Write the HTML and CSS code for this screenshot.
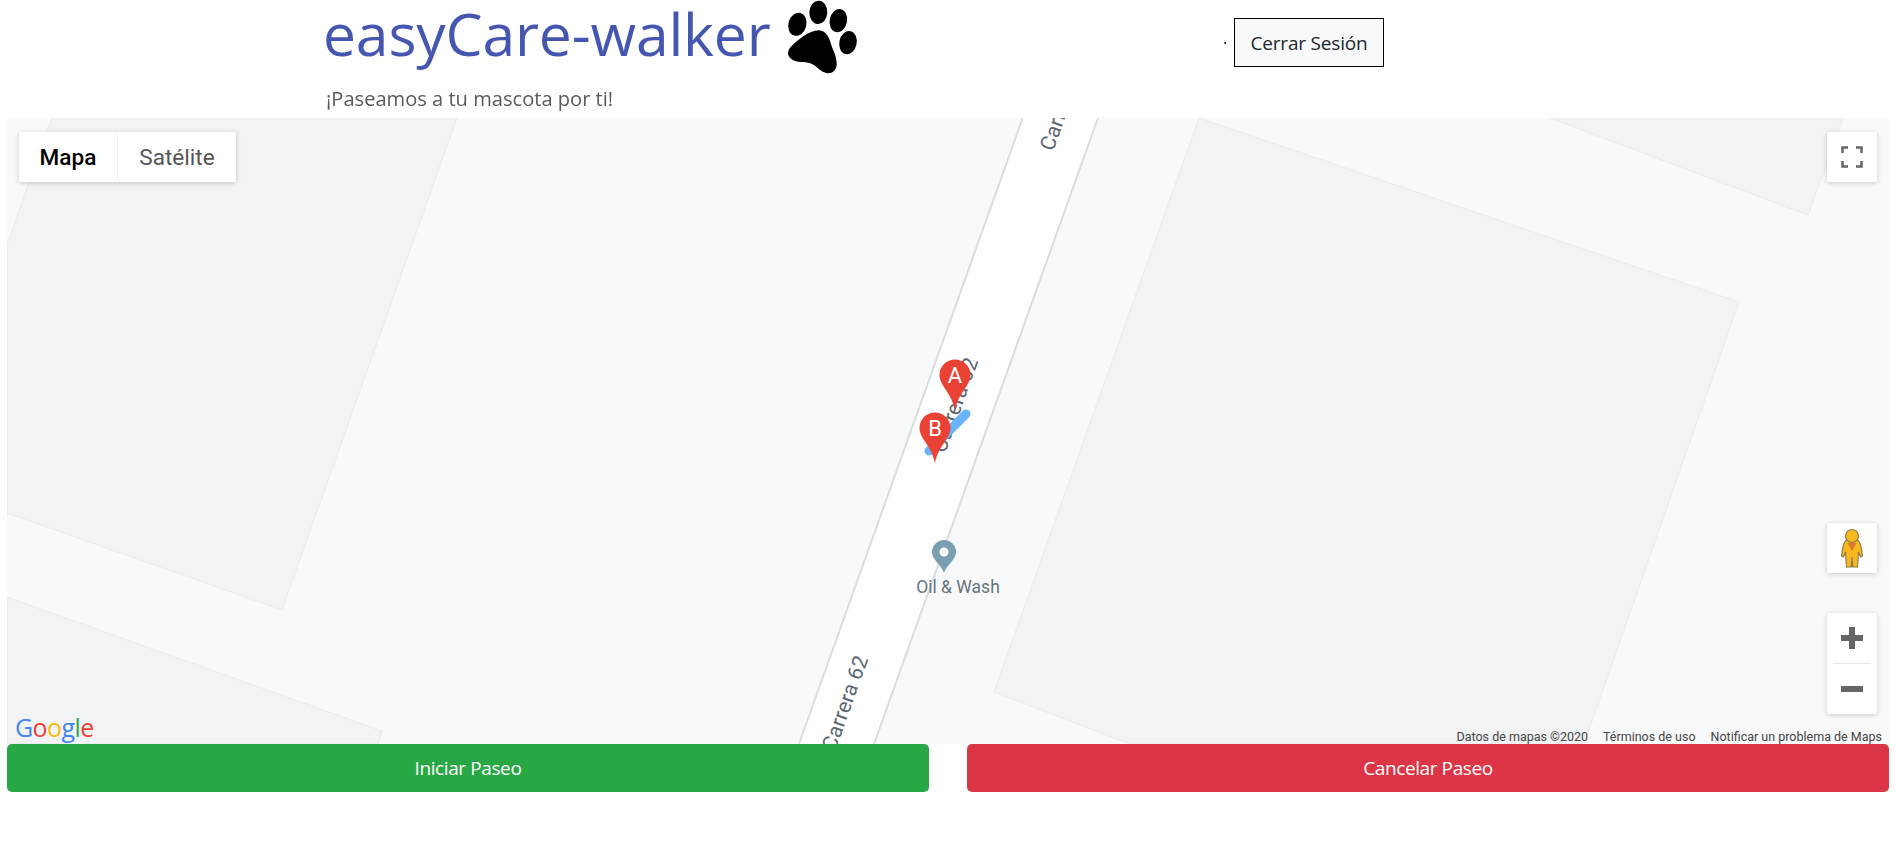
FILE: index.html
```html
<!DOCTYPE html>
<html lang="es">
<head>
<meta charset="utf-8">
<title>easyCare-walker</title>
<link rel="stylesheet" href="styles.css">
</head>
<body>
<header class="top">
  <div class="brand">
    <div class="logo">
      <span class="logo-text">easyCare-walker</span>
      <svg class="paw" viewBox="0 0 300 240" aria-hidden="true">
        <ellipse cx="85" cy="73" rx="27" ry="35" transform="rotate(15 85 73)"/>
        <ellipse cx="148" cy="37" rx="27" ry="35" transform="rotate(3 148 37)"/>
        <ellipse cx="208" cy="62" rx="26" ry="35" transform="rotate(12 208 62)"/>
        <ellipse cx="237" cy="128" rx="26" ry="35" transform="rotate(12 237 128)"/>
        <path d="M150 91C170 92 181 112 186 132C192 152 204 170 203 194C202 212 188 222 172 219C152 215 142 196 124 190C106 184 84 190 68 178C52 166 55 150 68 138C84 122 122 90 150 91Z"/>
      </svg>
    </div>
    <p class="tagline">¡Paseamos a tu mascota por ti!</p>
  </div>
  <div class="session">
    <span class="dot">.</span>
    <button class="logout">Cerrar Sesión</button>
  </div>
</header>

<main class="map">
  <svg class="map-canvas" viewBox="7 118 1882 626" aria-label="Mapa">
    <polygon class="block" points="52,118 457,118 282,610 7,513 7,245"/>
    <polygon class="block" points="7,597 382,731 378,744 7,744"/>
    <polygon class="block" points="1199,118 1739,302 1584,744 1130,744 994,692"/>
    <polygon class="block" points="1550,118 1843,118 1808,215"/>
    <polygon class="road" points="1022.7,118 1098,118 874,744 799,744"/>
    <line class="road-edge" x1="1022.7" y1="118" x2="799" y2="744"/>
    <line class="road-edge" x1="1098" y1="118" x2="874" y2="744"/>
    <text class="road-label" transform="translate(1053 152) rotate(-70.3)">Carrera 62</text>
    <text class="road-label" transform="translate(945 454) rotate(-70.3)">Carrera 62</text>
    <text class="road-label" transform="translate(835 752) rotate(-70.3)">Carrera 62</text>
    <line class="route" x1="966" y1="414" x2="929" y2="451"/>
    <path class="pin" d="M955 359.500a15.500 15.500 0 0 1 15.500 15.500c0 11-12.500 18-15.500 35.500c-3-17.500-15.500-24.500-15.500-35.500a15.500 15.500 0 0 1 15.500-15.500Z"/>
    <text class="pin-label" x="955" y="383">A</text>
    <path class="pin" d="M935 412.500a15.500 15.500 0 0 1 15.500 15.500c0 11-12.500 18-15.500 35.500c-3-17.500-15.500-24.500-15.500-35.500a15.500 15.500 0 0 1 15.500-15.500Z"/>
    <text class="pin-label" x="935" y="436">B</text>
    <path class="poi" d="M944 540a12 12 0 0 1 12 12c0 8-9 12-12 21c-3-9-12-13-12-21a12 12 0 0 1 12-12Z"/>
    <circle class="poi-hole" cx="944" cy="552" r="4.500"/>
    <text class="poi-label" x="958" y="593">Oil &amp; Wash</text>
  </svg>

  <div class="map-type">
    <span class="type-btn type-on">Mapa</span>
    <span class="type-btn">Satélite</span>
  </div>

  <div class="ctl fullscreen">
    <svg viewBox="0 0 50 50" aria-hidden="true"><path d="M15.500 21V15.500H21M29 15.500H34.500V21M34.500 29V34.500H29M21 34.500H15.500V29"/></svg>
  </div>

  <div class="ctl pegman">
    <svg viewBox="0 0 50 50" aria-hidden="true">
      <path class="peg-body" d="M19.500 17C17 19 16 22 15.500 27L14.500 33L16.500 34L18.500 29L19.500 44H24.300L25 34L25.700 44H30.500L31.500 29L33.500 34L35.500 33L34.500 27C34 22 33 19 30.500 17Z"/>
      <circle class="peg-body" cx="25" cy="13" r="6.500"/>
      <path class="peg-neck" d="M20.500 20H29.500L25 28Z"/>
    </svg>
  </div>

  <div class="ctl zoom">
    <svg class="zoom-icon" viewBox="0 0 50 50" aria-hidden="true"><path d="M14 25H36M25 14V36"/></svg>
    <div class="zoom-sep"></div>
    <svg class="zoom-icon" viewBox="0 0 50 50" aria-hidden="true"><path d="M14 25H36"/></svg>
  </div>

  <div class="google"><span class="g-b">G</span><span class="g-r">o</span><span class="g-y">o</span><span class="g-b">g</span><span class="g-g">l</span><span class="g-r">e</span></div>

  <div class="attrib">
    <span>Datos de mapas ©2020</span>
    <span>Términos de uso</span>
    <span>Notificar un problema de Maps</span>
  </div>
</main>

<div class="actions">
  <button class="action start">Iniciar Paseo</button>
  <button class="action cancel">Cancelar Paseo</button>
</div>
</body>
</html>
```

FILE: styles.css
```css
* { box-sizing: border-box; }
html, body { margin: 0; padding: 0; background: #fff; overflow: hidden; }
body { font-family: "Open Sans", "Noto Sans", sans-serif; color: #212529; }

.top { display: flex; height: 118px; padding-left: 323px; }
.brand { width: 891px; }
.logo { display: flex; height: 80px; }
.logo-text {
  font-size: 58.800px; line-height: 66px; height: 80px; color: #4556b0; letter-spacing: -0.15px;
  white-space: nowrap; filter: blur(0.35px);
}
.paw { width: 100px; height: 80px; margin-left: -2px; fill: #000; flex: none; }
.tagline {
  margin: 5px 0 0 3px; font-size: 20.100px; line-height: 28px; color: #5a5a5a;
  white-space: nowrap; filter: blur(0.3px);
}
.session { display: flex; align-items: flex-start; padding-top: 18px; }
.dot { font-size: 16px; line-height: 40px; width: 20px; padding-left: 9px; color: #000; }
.logout {
  width: 150px; height: 49px; padding: 0; border: 1px solid #000; border-radius: 0;
  background: #f8f9fa; color: #212529; font: 19px "Open Sans", sans-serif; letter-spacing: -0.2px;
}

.map { position: relative; height: 626px; margin: 0 7px; overflow: hidden; background: #f8f9fa; }
.map-canvas { display: block; width: 1882px; height: 626px; }
.block { fill: #f1f3f4; stroke: #e8eaed; stroke-width: 1; }
.road { fill: #fff; }
.road-edge { stroke: #dadce0; stroke-width: 2; }
.road-label { font: 21px Roboto, sans-serif; fill: #5b6670; letter-spacing: 0.2px; }
.route { stroke: #69b3f8; stroke-width: 9; stroke-linecap: round; }
.pin { fill: #ea4335; }
.pin-label { font: 22px Roboto, sans-serif; fill: #fff; text-anchor: middle; }
.poi { fill: #7a9eb2; }
.poi-hole { fill: #fff; }
.poi-label { font: 17.500px Roboto, sans-serif; fill: #66747c; text-anchor: middle; }

.map-type {
  position: absolute; left: 12px; top: 14px; display: flex; height: 50px;
  background: #fff; border-radius: 2px; box-shadow: 0 1px 5px rgba(0,0,0,.2);
}
.type-btn {
  display: flex; align-items: center; justify-content: center;
  width: 118px; font: 22.600px Roboto, sans-serif; color: #565656;
}
.type-on { width: 99px; font-weight: 500; color: #000; border-right: 1px solid #f0f0f0; }

.ctl {
  position: absolute; left: 1820px; width: 50px; background: #fff;
  border-radius: 2px; box-shadow: 0 1px 5px rgba(0,0,0,.2);
}
.ctl svg { display: block; width: 50px; height: 50px; }
.fullscreen { top: 14px; height: 50px; }
.fullscreen path { fill: none; stroke: #666; stroke-width: 2.500; }
.pegman { top: 405px; height: 50px; }
.peg-body { fill: #f9b81e; stroke: #8f7a4a; stroke-width: 1.200; }
.peg-neck { fill: #d97a2a; }
.zoom { top: 495px; height: 101px; }
.zoom-icon path { fill: none; stroke: #666; stroke-width: 6; }
.zoom-sep { width: 38px; height: 1px; margin: 0 auto; background: #e6e6e6; }

.google {
  position: absolute; left: 8px; top: 593px; font: 500 25px/32px "Open Sans", sans-serif;
  letter-spacing: -0.6px;
}
.g-b { color: #4285f4; }
.g-r { color: #ea4335; }
.g-y { color: #fbbc05; }
.g-g { color: #34a853; }

.attrib {
  position: absolute; right: 7px; bottom: 0; display: flex; gap: 15px;
  font: 12.500px/14px Roboto, sans-serif; color: #444; white-space: nowrap;
}

.actions { display: grid; grid-template-columns: 922px 922px; column-gap: 38px; margin: 0 7px; }
.action {
  height: 48px; padding: 0; border: 0; border-radius: 5px; color: #fff;
  font: 19px "Open Sans", sans-serif; letter-spacing: -0.4px;
}
.start { background: #28a745; }
.cancel { background: #dc3545; }
```
